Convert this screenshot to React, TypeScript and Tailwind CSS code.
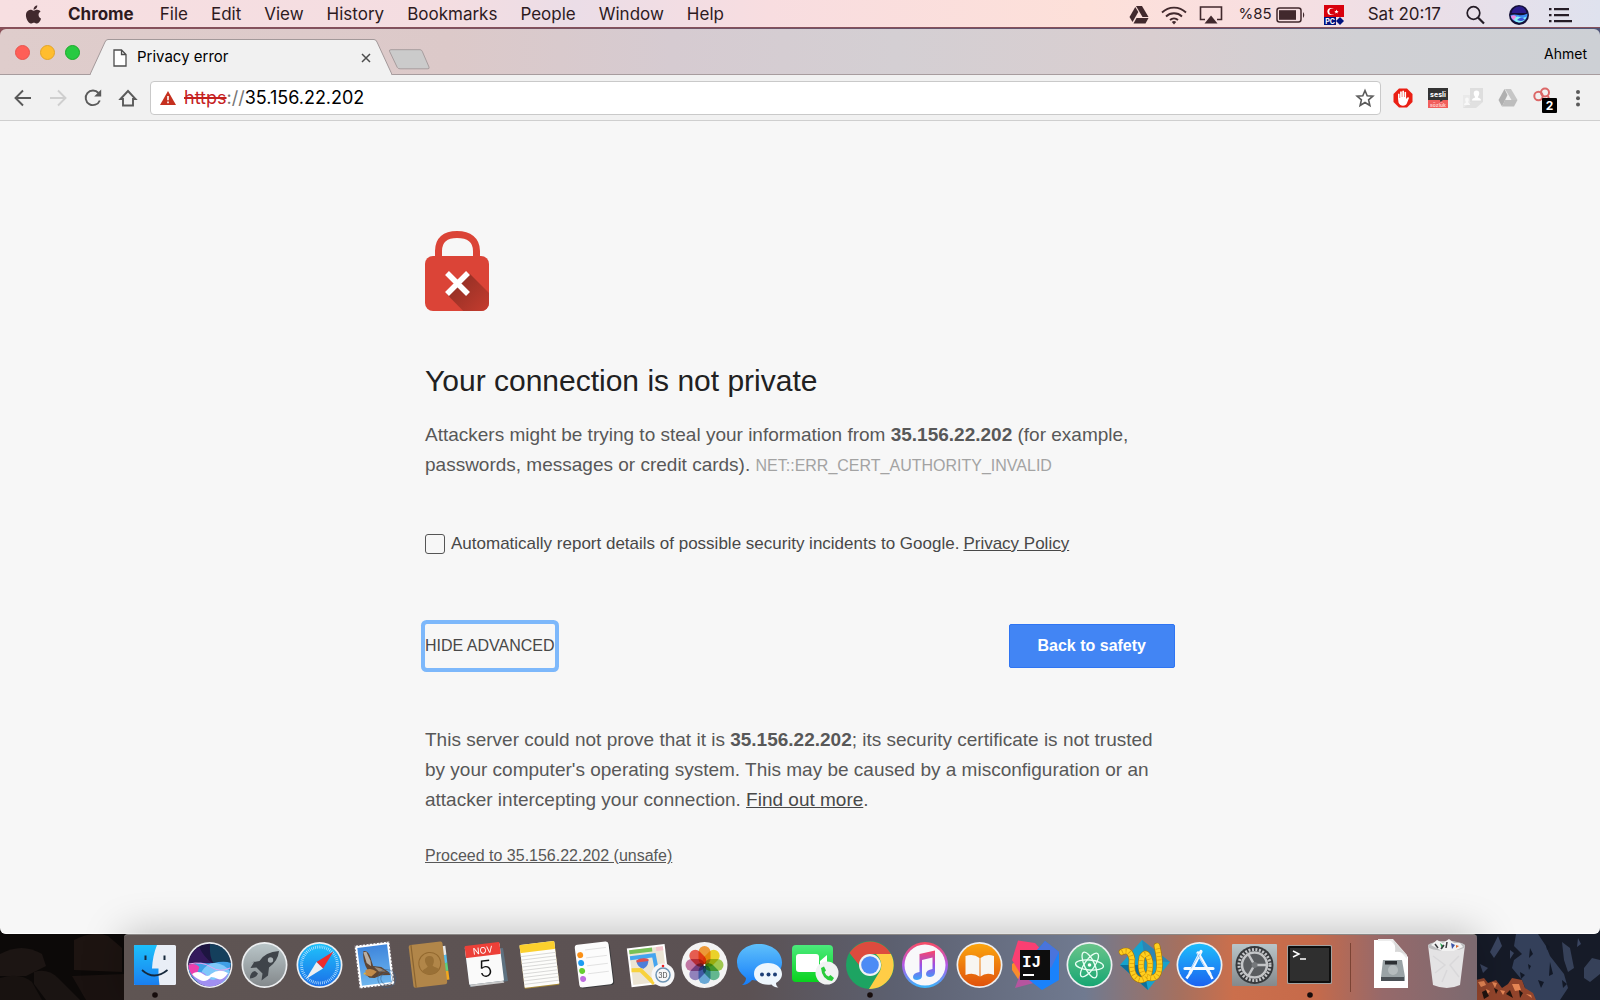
import { ReactNode, useState } from "react";

const APP_MENUS = [
	"File",
	"Edit",
	"View",
	"History",
	"Bookmarks",
	"People",
	"Window",
	"Help",
];

const AppleLogo = () => (
	<svg viewBox="0 0 170 170" className="h-[19px] w-[19px]" fill="#41292d">
		<path d="M150.4 130.3c-2.5 5.7-5.4 10.900-8.700 15.700-4.600 6.500-8.300 11-11.200 13.500-4.500 4.100-9.300 6.200-14.400 6.300-3.700 0-8.100-1-13.300-3.200-5.200-2.100-9.900-3.100-14.300-3.100-4.600 0-9.400 1-14.700 3.100-5.200 2.200-9.500 3.300-12.700 3.400-4.900.2-9.800-1.900-14.700-6.500-3.100-2.700-7-7.400-11.700-14-5-7-9.100-15.200-12.300-24.500-3.500-10.100-5.200-19.800-5.200-29.300 0-10.800 2.300-20.200 7-28 3.700-6.300 8.600-11.200 14.700-14.900 6.100-3.600 12.800-5.500 19.900-5.600 3.900 0 9 1.200 15.400 3.600 6.300 2.400 10.400 3.600 12.200 3.600 1.300 0 5.800-1.400 13.400-4.200 7.100-2.600 13.200-3.700 18.100-3.200 13.400 1.100 23.400 6.400 30.100 15.900-11.900 7.300-17.900 17.400-17.700 30.500.1 10.100 3.800 18.600 11 25.300 3.300 3.100 6.900 5.500 10.900 7.200-.9 2.500-1.800 4.900-2.800 7.400zM119.100 7c0 8-2.900 15.500-8.800 22.400-7 8.200-15.600 13-24.800 12.200-.1-1-.2-2-.2-3 0-7.700 3.400-16 9.300-22.700 3-3.400 6.800-6.300 11.400-8.600 4.600-2.200 8.900-3.500 13-3.700.1 1.100.1 2.300.1 3.400z" />
	</svg>
);

const StatusIcons = () => (
	<div className="flex items-center">
		<svg viewBox="0 0 20 18" className="mr-3 h-[18px] w-5" fill="#41292d">
			<path d="M7 0h6l6.500 11h-6z" />
			<path d="M6.300 1l3 5L3.500 16 .5 11z" />
			<path d="M7.500 12h12l-3 5.500H4.500z" />
		</svg>
		<svg
			viewBox="0 0 26 20"
			className="mr-3 h-5 w-[26px]"
			fill="none"
			stroke="#41292d"
			strokeWidth="1.800"
		>
			<path d="M1 7.500a17 17 0 0 1 24 0M5 11.500a11.500 11.500 0 0 1 16 0M9 15a6 6 0 0 1 8 0" />
			<path d="M10.800 17q2.200-2 4.400 0L13 19.500z" fill="#41292d" stroke="none" />
		</svg>
		<svg viewBox="0 0 24 20" className="mr-4 h-5 w-6" fill="none">
			<path
				d="M6 14.500H1.500V2h21v12.500H18"
				stroke="#41292d"
				strokeWidth="1.600"
			/>
			<path d="M12 10.500l6.500 8h-13z" fill="#41292d" />
		</svg>
		<span className="mr-1 text-[15px]">%85</span>
		<svg viewBox="0 0 30 16" className="mr-[18px] h-4 w-[30px]">
			<rect
				x="1"
				y="1"
				width="24"
				height="14"
				rx="2.500"
				fill="none"
				stroke="#41292d"
				strokeWidth="1.500"
			/>
			<rect x="3" y="3.200" width="17" height="9.600" fill="#41292d" />
			<path d="M27 5q2.500 3 0 6z" fill="#41292d" />
		</svg>
		<svg viewBox="0 0 20 20" className="mr-6 h-5 w-5">
			<rect width="20" height="12" fill="#d8000c" />
			<circle cx="7" cy="6.500" r="3.600" fill="#fff" />
			<circle cx="8.200" cy="6.500" r="2.900" fill="#d8000c" />
			<path d="M12.500 4.500l.6 1.500 1.600.1-1.300 1 .4 1.500-1.300-.8-1.400.8.400-1.500-1.200-1 1.600-.1z" fill="#fff" />
			<rect y="12" width="12" height="8" fill="#00127e" />
			<text
				x="6"
				y="18.500"
				textAnchor="middle"
				className="font-['Inter',sans-serif] text-[7px] font-bold"
				fill="#fff"
			>
				PC
			</text>
			<path d="M16 12l4 4-4 4-4-4z" fill="#00127e" />
		</svg>
	</div>
);

const MenuBar = () => (
	<header className="flex h-[28px] items-center border-b border-[#86505a] bg-[linear-gradient(90deg,#f7dfe1,#f4dde1_28%,#ebdde7_36%,#f8dde0_48%,#fde0d9_68%,#f9dfe0_78%,#eadfe8_90%,#dfe2ee)] pt-[2px] pr-7 pl-6 text-[17px] text-[#2d1a1e]">
		<button aria-label="Apple" className="mr-6 flex w-5">
			<AppleLogo />
		</button>
		<nav className="flex flex-1 items-center gap-[26px]">
			<button className="font-bold">Chrome</button>
			<div className="flex items-center gap-[23px]">
				{APP_MENUS.map((menu) => (
					<button key={menu}>{menu}</button>
				))}
			</div>
		</nav>
		<StatusIcons />
		<span className="mr-6">Sat 20:17</span>
		<button aria-label="Spotlight" className="mr-6">
			<svg
				viewBox="0 0 20 20"
				className="h-5 w-5"
				fill="none"
				stroke="#241c26"
				strokeWidth="1.700"
			>
				<circle cx="8.500" cy="8" r="6.300" />
				<path d="M13 12.500l6 6" strokeWidth="2.200" />
			</svg>
		</button>
		<button aria-label="Siri" className="mr-5">
			<svg viewBox="0 0 20 20" className="h-5 w-5">
				<circle cx="10" cy="10" r="10" fill="#141038" />
				<path d="M2.500 8Q4 2 10 1.500T17.500 8z" fill="#2a1c8c" />
				<path d="M1.500 10q4-1 8 0t9-1.500q0 8-8.500 9-8-1-8.500-7.500z" fill="#3b8bf3" />
				<path d="M2 11q4-2 6 1.500T4.500 15Q2 13 2 11z" fill="#ee8ce0" />
				<path d="M5 15q2-5 5.500-3t7-.5Q16 17 10 17.500 7 17 5 15z" fill="#8af1f6" />
				<path d="M8 15q4-4 8-.5-3 2.500-8 .5z" fill="#3a55d8" />
			</svg>
		</button>
		<button aria-label="Notification Center">
			<svg viewBox="0 0 23 16" className="h-4 w-[23px]" fill="#241c26">
				<path d="M0 1h2.500v2.300H0zM5 1h15v2.300H5zM0 7h2.500v2.300H0zM5 7h15v2.300H5zM0 13h2.500v2.300H0zM5 13h18v2.300H5z" />
			</svg>
		</button>
	</header>
);

const TabStrip = () => (
	<div className="flex h-[46px] items-end rounded-t-md border-b border-[#a79c9e] bg-[linear-gradient(90deg,#dfcdcc,#dcc9c9_28%,#d6cbd1_42%,#d4cfd3_56%,#d9ced0_72%,#d0d0d4_85%,#cdd0d5)]">
		<div className="flex gap-[10px] self-center pt-px pl-[15px]">
			<button
				aria-label="Close window"
				className="h-[15px] w-[15px] rounded-full border border-[#e8544d] bg-[#ff5f57]"
			/>
			<button
				aria-label="Minimize window"
				className="h-[15px] w-[15px] rounded-full border border-[#e3a428] bg-[#ffbd2e]"
			/>
			<button
				aria-label="Zoom window"
				className="h-[15px] w-[15px] rounded-full border border-[#1aab29] bg-[#28ca41]"
			/>
		</div>
		<div className="relative -mb-px ml-[10px] h-9 w-[302px]">
			<svg
				viewBox="0 0 302 36"
				className="absolute inset-0 h-full w-full"
				fill="#f1f1f1"
			>
				<path
					d="M0 35.500L15 3Q16 .5 18 .5H284Q286 .5 287 3L302 35.500"
					stroke="#a3999a"
				/>
				<path d="M1 35h300v1H1z" />
			</svg>
			<div className="relative flex h-full items-center pt-px pr-[21px] pl-[23px]">
				<svg
					viewBox="0 0 14 18"
					className="h-[18px] w-[14px]"
					fill="#fff"
					stroke="#4d4d4d"
					strokeWidth="1.300"
				>
					<path d="M1 1h7.500L13 5.500V17H1zM8.500 1v4.500H13" />
				</svg>
				<span className="ml-[10px] flex-1 text-[15px] text-black">
					Privacy error
				</span>
				<button aria-label="Close tab">
					<svg
						viewBox="0 0 10 10"
						className="h-[10px] w-[10px]"
						stroke="#4c4c4c"
						strokeWidth="1.500"
					>
						<path d="M1 1l8 8M9 1L1 9" />
					</svg>
				</button>
			</div>
		</div>
		<button aria-label="New tab" className="-ml-1 mb-1">
			<svg viewBox="0 0 42 21" className="h-[21px] w-[42px]">
				<path
					d="M3 .7h29q1.500 0 2.200 1.500L41 18q.6 1.800-1 1.800H12q-2 0-2.800-1.500L1.500 2.200Q1 .7 3 .7z"
					fill="#cbcbcb"
					stroke="#a79d9e"
				/>
			</svg>
		</button>
		<button className="mr-[13px] ml-auto self-center pt-1 text-sm text-black">
			Ahmet
		</button>
	</div>
);

const NavIcon = ({
	label,
	children,
	color = "#5a5a5a",
}: {
	label: string;
	children: ReactNode;
	color?: string;
}) => (
	<button aria-label={label}>
		<svg
			viewBox="0 0 20 20"
			className="h-5 w-5"
			fill="none"
			stroke={color}
			strokeWidth="1.900"
		>
			{children}
		</svg>
	</button>
);

const Extensions = () => (
	<div className="flex items-center gap-[15px]">
		<button aria-label="AdBlock">
			<svg viewBox="0 0 20 20" className="h-5 w-5">
				<path d="M6 .5h8L19.500 6v8L14 19.500H6L.5 14V6z" fill="#ea1f14" />
				<path
					d="M5 10.500V6q.9-1 1.600 0v4h.5V3.800q.9-1 1.700 0V9h.5V3q.9-1 1.700 0v6h.5V4.300q.9-1 1.600 0V11l1.300-1.500q1.200-.7 1.600.4L14 15q-1 2.800-4 2.800T5.500 14.500z"
					fill="#fff"
				/>
			</svg>
		</button>
		<button aria-label="Sesli Sözlük">
			<svg viewBox="0 0 20 20" className="h-5 w-5">
				<rect width="20" height="12" fill="#333" />
				<rect y="12" width="20" height="8" fill="#f15e5c" />
				<path d="M12 12h3l-2.500 2z" fill="#333" />
				<text
					x="10"
					y="9"
					textAnchor="middle"
					fill="#fff"
					className="font-['Inter',sans-serif] text-[7px] font-bold"
				>
					sesli
				</text>
				<text
					x="10"
					y="18.500"
					textAnchor="middle"
					fill="#ffc9c7"
					className="font-['Inter',sans-serif] text-[5px] font-bold"
				>
					sözlük
				</text>
			</svg>
		</button>
		<button aria-label="Contacts extension">
			<svg viewBox="0 0 20 20" className="h-5 w-5">
				<path d="M0 7h9v13H0z" fill="#e9e9e9" />
				<path d="M8 14h12l-7 6H0z" fill="#e0e0e0" />
				<rect x="7" width="13" height="14" fill="#dedede" />
				<path
					d="M13.500 2.500c4 0 3 5 1.300 6.500.3 1.500 3.200.8 3.200 3.500H9c0-2.700 2.900-2 3.200-3.500-1.700-1.500-2.700-6.500 1.300-6.500z"
					fill="#fff"
				/>
				<path
					d="M4 9.500c2.500 0 2 3.500 1 4.500 0 1 2 1 2 3H1c0-2 2-2 2-3-1-1-1.500-4.500 1-4.500z"
					fill="#f8f8f8"
				/>
			</svg>
		</button>
		<button aria-label="Drive extension">
			<svg viewBox="0 0 20 18" className="h-[18px] w-5">
				<path d="M7 0h6l6.500 11h-6z" fill="#c6c6c6" />
				<path d="M6.500 0L9.500 6 4 17.500.5 11z" fill="#b0b0b0" />
				<path d="M7 11h12.500L16 17.500H4z" fill="#bdbdbd" />
			</svg>
		</button>
		<button aria-label="Mask extension, 2" className="-mr-[6px]">
			<svg viewBox="0 0 26 26" className="mt-1 h-[26px] w-[26px]">
				<g fill="none" stroke="#dc6868" strokeWidth="2">
					<circle cx="5.500" cy="9" r="4.200" />
					<circle cx="12" cy="5.500" r="4" />
					<path d="M9 11l3 2 4-1-1-3" />
				</g>
				<rect x="9" y="11" width="15" height="15" rx="1" fill="#000" />
				<text
					x="16.500"
					y="23"
					textAnchor="middle"
					fill="#fff"
					className="font-['Inter',sans-serif] text-[12px] font-bold"
				>
					2
				</text>
			</svg>
		</button>
		<button aria-label="Chrome menu">
			<svg viewBox="0 0 20 20" className="h-5 w-5" fill="#5a5a5a">
				<circle cx="10" cy="4" r="2" />
				<circle cx="10" cy="10.300" r="2" />
				<circle cx="10" cy="16.600" r="2" />
			</svg>
		</button>
	</div>
);

const Toolbar = () => (
	<div className="flex h-[46px] items-center border-b border-[#cfcfcf] bg-[#f1f1f1] pr-3 pl-[13px]">
		<div className="flex gap-[15px]">
			<NavIcon label="Back">
				<path d="M18 10H3M10 2.500L2.500 10l7.500 7.500" />
			</NavIcon>
			<NavIcon label="Forward" color="#cfcfcf">
				<path d="M2 10h15M10 2.500l7.500 7.500-7.500 7.500" />
			</NavIcon>
			<NavIcon label="Reload">
				<path d="M16.800 12.500a7.300 7.300 0 1 1-1.300-7.500" />
				<path d="M18.200 1.500v7h-7z" fill="#5a5a5a" stroke="none" />
			</NavIcon>
			<NavIcon label="Home">
				<path d="M2.500 11L10 3l7.500 8H15v6.500H5V11z" />
			</NavIcon>
		</div>
		<div className="mx-3 flex h-[34px] flex-1 items-center rounded-[4px] border border-[#c9c9c9] bg-white px-[9px] text-[18px]">
			<svg viewBox="0 0 16 14" className="mr-2 h-[14px] w-4">
				<path d="M8 0l8 14H0z" fill="#c5301f" />
				<path d="M7.200 5h1.600v4.300H7.200zM7.200 10.500h1.600v1.700H7.200z" fill="#fff" />
			</svg>
			<label htmlFor="address" className="text-[#757575]">
				<span className="text-[#c5221f] line-through decoration-2">https</span>
				://
			</label>
			<input
				id="address"
				defaultValue="35.156.22.202"
				className="min-w-0 flex-1 bg-transparent text-black outline-none"
			/>
			<button aria-label="Bookmark this page">
				<svg
					viewBox="0 0 20 20"
					className="-mr-1 h-5 w-5"
					fill="none"
					stroke="#5a5a5a"
					strokeWidth="1.600"
				>
					<path d="M10 2.500l2.200 5.200 5.700.5-4.300 3.700 1.300 5.600L10 14.500l-4.900 3 1.300-5.600-4.300-3.700 5.700-.5z" />
				</svg>
			</button>
		</div>
		<Extensions />
	</div>
);

const BrokenLock = () => (
	<svg viewBox="0 0 64 80" className="h-20 w-16">
		<defs>
			<linearGradient id="lock-shadow" x1="0.200" y1="0.200" x2="0.700" y2="0.700">
				<stop offset="0" stopColor="#983126" />
				<stop offset="1" stopColor="#c23b2e" />
			</linearGradient>
			<clipPath id="lock-body">
				<rect y="25" width="64" height="55" rx="8" />
			</clipPath>
		</defs>
		<path
			d="M13.500 27V20C13.500 9 20 3.500 32 3.500S51.500 9 51.500 20v7"
			fill="none"
			stroke="#db4437"
			strokeWidth="7"
		/>
		<rect y="25" width="64" height="55" rx="8" fill="#db4437" />
		<path
			d="M45 43l30 30-20 24L22 63.500 32 52z"
			fill="url(#lock-shadow)"
			clipPath="url(#lock-body)"
		/>
		<path d="M22 42l21 21M43 42L22 63" stroke="#fff" strokeWidth="5.500" />
	</svg>
);

const Interstitial = () => {
	const [report, setReport] = useState(false);

	return (
		<main className="flex-1 rounded-b-md border-b border-white bg-[#f7f7f7] px-6 pt-[110px] font-['Liberation_Sans',Arial,sans-serif] text-[19px] leading-[30px] text-[#585858]">
			<div className="mx-auto max-w-[750px]">
				<BrokenLock />
				<h1 className="mt-[50px] text-[30px] leading-10 text-[#212121]">
					Your connection is not private
				</h1>
				<p className="mt-[19px]">
					Attackers might be trying to steal your information from{" "}
					<strong>35.156.22.202</strong> (for example, passwords, messages or
					credit cards).{" "}
					<span className="text-base text-[#a3a3a3]">
						NET::ERR_CERT_AUTHORITY_INVALID
					</span>
				</p>
				<div className="mt-[49px] flex items-center text-[17px] text-[#484848]">
					<input
						id="report"
						type="checkbox"
						checked={report}
						onChange={() => setReport(!report)}
						className="mr-[6px] h-5 w-5 appearance-none rounded-[3px] border border-[#555] checked:bg-[#555]"
					/>
					<label htmlFor="report">
						Automatically report details of possible security incidents to
						Google.
					</label>
					<a href="#privacy" className="ml-1 underline">
						Privacy Policy
					</a>
				</div>
				<div className="mt-[65px] flex items-center justify-between text-base">
					<button className="h-11 rounded-xs text-[#484848] uppercase ring-4 ring-[#7db8fb]">
						Hide advanced
					</button>
					<button className="h-11 rounded-xs border border-[#2f75f3] bg-[#4285f4] px-7 font-bold text-white">
						Back to safety
					</button>
				</div>
				<p className="mt-[57px]">
					This server could not prove that it is{" "}
					<strong>35.156.22.202</strong>; its security certificate is not
					trusted by your computer's operating system. This may be caused by a
					misconfiguration or an attacker intercepting your connection.{" "}
					<a href="#more" className="text-[#484848] underline">
						Find out more
					</a>
					.
				</p>
				<p className="mt-[26px] text-base leading-[30px]">
					<a href="#proceed" className="underline">
						Proceed to 35.156.22.202 (unsafe)
					</a>
				</p>
			</div>
		</main>
	);
};

// Every dock drawing lives in a 55px wide cell with the glyph centred on 27.5,31.
const Disc = ({ fill, rim = "#eceef0" }: { fill: string; rim?: string }) => (
	<>
		<circle cx="27.500" cy="31" r="23" fill={rim} />
		<circle cx="27.500" cy="31" r="21.300" fill={fill} />
	</>
);

const PETALS = [
	"#f9941e",
	"#f5d80f",
	"#9bcb3b",
	"#53b788",
	"#5aa5dc",
	"#8a78bd",
	"#c46aa0",
	"#ef4b3c",
];

const ROPE =
	"M5 18Q13 14 15 25Q13 44 24 46Q34 45 33 28Q30 15 25 23Q21 44 35 44Q47 43 40 12";

const DOCK_APPS: { name: string; running?: boolean; art: ReactNode }[] = [
	{
		name: "Finder",
		running: true,
		art: (
			<>
				<rect x="7" y="11" width="42" height="40" rx="1.500" fill="#e9eef6" />
				<path
					d="M8 11h22c-3 7-4.500 15-5 23.500h6.500c-.2 6 .3 11 1 16.500H8q-1 0-1-1.500V12.500Q7 11 8 11z"
					fill="url(#finder)"
				/>
				<path
					d="M18.500 21.500v4.500M37.500 21.500v4.500"
					stroke="#16293c"
					strokeWidth="2"
				/>
				<path
					d="M15 36q12 11 25.500 0"
					fill="none"
					stroke="#16293c"
					strokeWidth="1.700"
				/>
			</>
		),
	},
	{
		name: "Siri",
		art: (
			<>
				<Disc fill="#1d1540" />
				<path d="M28 10q19 1 21 21l-3 9q-9-3-14-10t-4-20z" fill="#134a63" opacity=".8" />
				<path d="M6.300 30q2-12 11-17 4 10 14 17t14 12z" fill="#3b1c63" opacity=".8" />
				<path
					d="M6.300 32q8-4 16-3t14-1q8-1 12.500 1-1 14-10 20-11 6-22 0-10-6-10.500-17z"
					fill="#3f9fe6"
				/>
				<path d="M6.300 31q7-3 11 2l-4 12Q7 39 6.300 31z" fill="#ec3fae" />
				<path d="M20 37q6-9 14-8t14 8q-2 8-8 12H17z" fill="#7fc8fa" />
				<path d="M11 42q8-8 14 0t12 0 9-1q-5 11-18.500 11.500Q16 52 11 42z" fill="#a08ff0" />
				<path
					d="M10 40q6-4 11 0t8 0q8-6 17-1-5 8-10 6-4-2-7-2-5 6-11 3t-8-6z"
					fill="#fff"
				/>
				<path d="M7 30q13-3 22 3t19 1" fill="none" stroke="#e8a2f0" />
			</>
		),
	},
	{
		name: "Launchpad",
		art: (
			<>
				<Disc fill="url(#steel)" />
				<path
					d="M42 17q-14 1-19.500 10l-8 1.500 3-1-4 6.500 6-.5 6 6-1 7 6.500-5 1-8Q41 27 42 17z"
					fill="#3f444a"
				/>
				<circle cx="33.500" cy="26" r="2.700" fill="#aab2b6" />
				<path d="M18 37q-5 1-5 7.500 6-.5 8-5z" fill="#3f444a" />
			</>
		),
	},
	{
		name: "Safari",
		art: (
			<>
				<Disc fill="url(#safari)" />
				<circle
					cx="27.500"
					cy="31"
					r="18"
					fill="none"
					stroke="#bfe6ff"
					strokeWidth="3"
					strokeDasharray="0.700 1.200"
				/>
				<path d="M41.500 17.500L31 34.500 24.500 28z" fill="#ee2c2c" />
				<path d="M14 45l10.500-17 6.500 6.500z" fill="#eceff2" />
			</>
		),
	},
	{
		name: "Mail",
		art: (
			<g transform="rotate(-7 27 31)">
				<rect x="10" y="9.500" width="35" height="43" fill="#fff" />
				<rect
					x="10"
					y="9.500"
					width="35"
					height="43"
					fill="none"
					stroke="#6a6063"
					strokeWidth="1.500"
					strokeDasharray="1.500 2"
				/>
				<rect x="12.500" y="12" width="30" height="38" fill="url(#sky)" />
				<path
					d="M18 16q4-1 6 5l2 11 8 2 7 6 1 3-9-1-7 2-5-1-3-3 2-5q-4-9-2-19z"
					fill="#5f4634"
				/>
				<path d="M18 17l3 0 3 9 0 6-4-4z" fill="#b9aea3" />
				<path d="M27 33l6 2 5 4-7-1z" fill="#9c8a78" />
				<path d="M18 35q6-2 11 3l-6 4-6-2z" fill="#c28b4a" />
				<path d="M17 37l-2 2 3 0z" fill="#f0b429" />
				<g fill="none" stroke="#3b5f86" opacity=".5">
					<circle cx="38" cy="46" r="9" />
					<circle cx="38" cy="46" r="6" />
				</g>
			</g>
		),
	},
	{
		name: "Contacts",
		art: (
			<g transform="rotate(-7 27 31)">
				<path d="M42 14h3.500v9H42z" fill="#e8e8e8" />
				<path d="M42 23h3.500v8H42z" fill="#58bdea" />
				<path d="M42 31h3.500v8H42z" fill="#5fd07a" />
				<path d="M42 39h3.500v9H42z" fill="#f2a81d" />
				<rect x="9" y="9" width="34" height="43" rx="2" fill="#b18649" />
				<path d="M11.500 9v43" stroke="#8a6431" strokeWidth="1.200" />
				<circle cx="28" cy="29.500" r="11" fill="none" stroke="#93692f" />
				<path
					d="M28 22c6 0 5 7 2.500 10 .5 2 5 2 6 5-5 5-12 5-17 0 1-3 5.500-3 6-5C23 29 22 22 28 22z"
					fill="#997036"
				/>
			</g>
		),
	},
	{
		name: "Calendar",
		art: (
			<>
				<path d="M8 17l5 36 38-6-5-33z" fill="#5d7180" />
				<g transform="rotate(-7 27 31)">
					<rect x="10" y="11" width="35" height="38" rx="1" fill="#fafafa" />
					<rect x="10" y="10" width="35" height="12" rx="1" fill="#ec4038" />
					<path d="M11 49h33l1 2H11z" fill="#c9c9c9" />
					<text
						x="27.500"
						y="19.500"
						textAnchor="middle"
						fill="#fff"
						className="font-['Inter',sans-serif] text-[9px]"
					>
						NOV
					</text>
					<text
						x="28"
						y="43"
						textAnchor="middle"
						fill="#111"
						className="font-['Inter',sans-serif] text-[23px] font-light"
					>
						5
					</text>
				</g>
			</>
		),
	},
	{
		name: "Notes",
		art: (
			<g transform="rotate(-7 27 31)">
				<rect x="10" y="10" width="35" height="43" rx="1" fill="#a88a36" />
				<rect x="10" y="9" width="35" height="43" rx="1" fill="#fdfdfb" />
				<rect x="10" y="9" width="35" height="8" rx="1" fill="#fbd02d" />
				<path
					d="M10 20.500h35M10 24h35M10 27.500h35M10 31h35M10 34.500h35M10 38h35M10 41.500h35M10 45h35M10 48.500h35"
					stroke="#d2d2d0"
					strokeWidth=".8"
				/>
			</g>
		),
	},
	{
		name: "Reminders",
		art: (
			<g transform="rotate(-7 27 31)">
				<rect x="11" y="10" width="34" height="43" rx="3" fill="#3a3a3c" />
				<rect x="10" y="9" width="34" height="43" rx="3" fill="#fcfcfc" />
				<path
					d="M20 15h21M20 23h21M20 31h21M20 39h21"
					stroke="#dcdcdc"
					strokeWidth=".8"
				/>
				<circle cx="14.500" cy="19.500" r="3" fill="#fb9016" />
				<circle cx="14.500" cy="27.500" r="3" fill="#1c9cf2" />
				<circle cx="14.500" cy="35.500" r="3" fill="#66cf30" />
				<circle cx="14.500" cy="43.500" r="3" fill="#bf6ee0" />
			</g>
		),
	},
	{
		name: "Maps",
		art: (
			<>
				<g transform="rotate(-7 27 31)">
					<rect x="7" y="12" width="38" height="39" fill="#fff" />
					<rect x="9" y="14" width="34" height="35" fill="#ece5d4" />
					<path d="M9 14h23v4H9z" fill="#77c157" />
					<path d="M36 14h7v4h-7z" fill="#f4c4cb" />
					<path d="M9 22h24l2 27" fill="none" stroke="#45a5ef" strokeWidth="4" />
					<path d="M9 34l9 1 12 15" fill="none" stroke="#f8d23c" strokeWidth="4" />
					<path d="M15 25q6-3 12 0 0 7-6 9-6-2-6-9z" fill="#4f7fd8" />
					<path d="M15 25q6-3 12 0v2H15z" fill="#e0504d" />
				</g>
				<circle cx="41" cy="41" r="11.500" fill="#f6f7f8" />
				<circle cx="41" cy="41" r="7" fill="none" stroke="#6d94b3" strokeWidth="1.500" />
				<circle cx="41" cy="32" r="1.300" fill="#e22" />
				<text
					x="41"
					y="43.500"
					textAnchor="middle"
					fill="#444"
					className="font-['Inter',sans-serif] text-[7px]"
				>
					3D
				</text>
			</>
		),
	},
	{
		name: "Photos",
		art: (
			<>
				<circle cx="27.500" cy="31" r="23" fill="#f3f3f3" />
				{PETALS.map((color, index) => (
					<rect
						key={color}
						x="21.500"
						y="12"
						width="12"
						height="19"
						rx="6"
						fill={color}
						opacity=".88"
						className="mix-blend-multiply"
						transform={`rotate(${index * 45} 27.500 31)`}
					/>
				))}
				<circle cx="27.500" cy="31" r="1" fill="#fff" />
			</>
		),
	},
	{
		name: "Messages",
		art: (
			<>
				<path
					d="M27 10c13 0 23 8 23 18.500S40 47 27 47l-7-1q-4 5-10 5 4-3 4-7Q5 37 5 28.500C5 18 14 10 27 10z"
					fill="url(#bubble)"
				/>
				<path
					d="M36 29c8 0 14 4.500 14 11 0 4-3 7.500-6 9 0 2 1 3.500 2.500 4.500-4 0-6-1.500-7-3C30 52 22 47 22 40s6-11 14-11z"
					fill="#eef6fd"
				/>
				<g fill="#1e3f77">
					<circle cx="30" cy="40.500" r="2" />
					<circle cx="36.500" cy="40.500" r="2" />
					<circle cx="43" cy="40.500" r="2" />
				</g>
			</>
		),
	},
	{
		name: "FaceTime",
		art: (
			<>
				<rect x="5" y="11" width="41" height="37" rx="4" fill="url(#green)" />
				<rect x="9" y="20" width="23" height="18" rx="3" fill="#fff" />
				<path d="M33 27l7-6v15l-7-4z" fill="#fff" />
				<circle cx="40" cy="39" r="11.500" fill="#f1f3f3" />
				<path
					d="M34 34l3-1.500 2 4-1.500 1.500q1 3 4 4.500l2-1.500 3.500 3-2 3Q35 46 34 34z"
					fill="#2acb3c"
				/>
			</>
		),
	},
	{
		name: "Chrome",
		running: true,
		art: (
			<>
				<circle cx="28" cy="31" r="24" fill="#1da462" />
				<path d="M7.500 19A24 24 0 0 1 49 20H28q-8 1-11 11z" fill="#dd4b3e" />
				<path d="M49 20a24 24 0 0 1-22 35l11-18q4-9-4-17z" fill="#ffcd46" />
				<circle cx="28" cy="31" r="11" fill="#f2f2f2" />
				<circle cx="28" cy="31" r="8.800" fill="#4c8bf5" />
			</>
		),
	},
	{
		name: "iTunes",
		art: (
			<>
				<circle cx="28" cy="31" r="23" fill="url(#itunes)" />
				<circle cx="28" cy="31" r="20.500" fill="#f8f8fa" />
				<path
					d="M22.500 20L38 16.500V38q0 4.500-5 5-4 0-4-3 0-4 6.500-5V23.500L25 26v16q0 3.500-5 4-4 0-4-3 0-4 6.500-5z"
					fill="url(#note)"
				/>
			</>
		),
	},
	{
		name: "iBooks",
		art: (
			<>
				<Disc fill="url(#orange)" />
				<path
					d="M27.500 24q-6-5-14-2v19q8-3 14 1.500zM28.500 24q6-5 13.500-2v19q-8-3-13.500 1.500z"
					fill="#f7f5f2"
				/>
			</>
		),
	},
	{
		name: "IntelliJ IDEA",
		art: (
			<>
				<path d="M5 30l8-5 4 18-6 2-6-9z" fill="#f98c2c" />
				<path d="M11 6.500L28 9l12 13-24 22L5 26z" fill="#fb3f72" />
				<path d="M14 38l-6 16 30-8-6-14z" fill="#b5559f" />
				<path d="M38 7l14 11v28L35 56 22 46l8-30z" fill="#1a82fb" />
				<path d="M38 7l14 11-8 16-16-14z" fill="#4a74dc" />
				<rect x="13" y="16" width="30" height="30" fill="#0d0d0d" />
				<path d="M16 40h11v2H16z" fill="#fff" />
				<text
					x="15"
					y="33"
					fill="#fff"
					className="font-['Liberation_Mono',monospace] text-[16px] font-bold"
				>
					IJ
				</text>
			</>
		),
	},
	{
		name: "Atom",
		art: (
			<>
				<Disc fill="url(#atom)" />
				<g fill="none" stroke="#e9fff4" strokeWidth="1.300">
					<ellipse cx="27.500" cy="31" rx="14" ry="5" transform="rotate(5 27.500 31)" />
					<ellipse cx="27.500" cy="31" rx="14" ry="5" transform="rotate(65 27.500 31)" />
					<ellipse cx="27.500" cy="31" rx="14" ry="5" transform="rotate(-55 27.500 31)" />
				</g>
				<circle cx="27.500" cy="31" r="1.800" fill="#fff" />
			</>
		),
	},
	{
		name: "Rope",
		art: (
			<>
				<path d="M25 6l28 22-22 28L3 31z" fill="#17a2cc" />
				<path d="M25 6l28 22-25-1z" fill="#2c86b5" />
				<path d="M3 31l28 25-5-25z" fill="#0d6f9b" />
				<g fill="none" strokeLinecap="round">
					<path d={ROPE} stroke="#a87708" strokeWidth="6.500" />
					<path d={ROPE} stroke="#ffcf1f" strokeWidth="5.200" />
					<path
						d={ROPE}
						stroke="#d99e0c"
						strokeWidth="4.500"
						strokeLinecap="butt"
						strokeDasharray="0.800 3"
					/>
				</g>
			</>
		),
	},
	{
		name: "App Store",
		art: (
			<>
				<Disc fill="url(#store)" />
				<g stroke="#f4faff" strokeWidth="3.200" strokeLinecap="round">
					<path d="M29 17.500L18 39M13 34.500h28M26 19l12 21" />
				</g>
				<path d="M17.500 40l-3 4.500M38.500 41l2 4" stroke="#f4faff" strokeWidth="2.500" />
				<path d="M19 34.500l9-15M25 19l8 14" stroke="#7fb8f6" strokeWidth=".7" />
			</>
		),
	},
	{
		name: "System Preferences",
		art: (
			<>
				<rect x="5" y="10" width="45" height="42" rx="1" fill="url(#steel)" />
				<circle cx="27.500" cy="31" r="19" fill="#36393c" />
				<circle
					cx="27.500"
					cy="31"
					r="15.500"
					fill="none"
					stroke="#c3c5c7"
					strokeWidth="3"
					strokeDasharray="2 1.500"
				/>
				<circle
					cx="27.500"
					cy="31"
					r="12.500"
					fill="#5a5d60"
					stroke="#c3c5c7"
					strokeWidth="2.500"
				/>
				<path
					d="M27.500 31h12M27.500 31l-6-10.500M27.500 31l-6 10.500"
					stroke="#c3c5c7"
					strokeWidth="2.500"
				/>
				<circle cx="27.500" cy="31" r="3" fill="#75787b" />
			</>
		),
	},
	{
		name: "Terminal",
		running: true,
		art: (
			<>
				<rect x="5" y="11" width="45" height="39" rx="1.500" fill="#a3a19f" />
				<rect x="6" y="12" width="43" height="37" rx="1" fill="#0e0e0e" />
				<rect x="8" y="14" width="39" height="33" fill="#2f2f2f" />
				<path
					d="M11 17l6 3-6 3M18 25h6"
					fill="none"
					stroke="#fff"
					strokeWidth="1.500"
				/>
			</>
		),
	},
];

const DOCK_FILES: { name: string; running?: boolean; art: ReactNode }[] = [
	{
		name: "Disk image",
		art: (
			<>
				<path d="M10 6h17l17 17v31H10z" fill="#fff" />
				<path d="M14 5h15l14 16v4L27 7H14z" fill="#ececec" />
				<path d="M29 6q3 6 2 12 7-1 13 5z" fill="#d7d7d7" />
				<path d="M19 26h19l3 17v4H17v-4z" fill="#9aa3a6" />
				<rect x="21" y="27" width="12" height="3.500" fill="#2b2f33" />
				<circle cx="29" cy="36" r="5" fill="#b5bcbe" />
				<path d="M17 43h23v4H17z" fill="#4b5156" />
			</>
		),
	},
	{
		name: "Trash",
		art: (
			<>
				<path d="M9 11q19-8 37 0l-5 40q-13 6-27 0z" fill="#e4e3e4" />
				<ellipse cx="27.500" cy="12" rx="18.500" ry="5" fill="#bdbdbf" />
				<path d="M12 11l6-5 6 3 6-4 5 4 6 0 3 4-9 4-12 0z" fill="#f2f2f2" />
				<path d="M21 9l4 3-2 3z" fill="#27a04e" />
				<path d="M32 9l4 2-3 4z" fill="#3a53a8" />
				<path d="M37 11l3 1-3 2z" fill="#d9672a" />
				<path d="M16 10l3 4M28 8l-1 6M25 11l-3 4" stroke="#3c3c40" strokeWidth="1.500" />
				<path
					d="M14 22l12 9-10 8M40 22l-9 9 9 12M28 36l-5 12"
					fill="none"
					stroke="#d9d8da"
					strokeWidth="1.500"
				/>
			</>
		),
	},
];

const Gradient = ({ id, stops }: { id: string; stops: string[] }) => (
	<linearGradient id={id} x1="0" y1="0" x2="0" y2="1">
		{stops.map((color, index) => (
			<stop
				key={color}
				offset={index / (stops.length - 1)}
				stopColor={color}
			/>
		))}
	</linearGradient>
);

const DockGradients = () => (
	<svg className="absolute h-0 w-0" aria-hidden="true">
		<defs>
			<Gradient id="finder" stops={["#1cc0fb", "#1a7ff0"]} />
			<Gradient id="steel" stops={["#b9c5c8", "#84898c"]} />
			<Gradient id="safari" stops={["#1fc3fb", "#1b6fe8"]} />
			<Gradient id="sky" stops={["#3f86dc", "#6db5ee"]} />
			<Gradient id="bubble" stops={["#5fc0fb", "#147dfa"]} />
			<Gradient id="green" stops={["#4bea7c", "#09d21e"]} />
			<Gradient id="itunes" stops={["#fb4c60", "#b357ea", "#35b8fb"]} />
			<Gradient id="note" stops={["#fa4767", "#9b4ee6", "#3aa6f8"]} />
			<Gradient id="orange" stops={["#fba50e", "#e0520c"]} />
			<Gradient id="atom" stops={["#69c48a", "#17a673"]} />
			<Gradient id="store" stops={["#1dbdfb", "#1c62f0"]} />
		</defs>
	</svg>
);

const DockItem = ({
	name,
	running,
	art,
}: {
	name: string;
	running?: boolean;
	art: ReactNode;
}) => (
	<button aria-label={name} className="min-w-0">
		<svg viewBox="0 1 55 65" className="h-[65px] w-[55px]">
			{art}
			{running && <circle cx="28" cy="61" r="2.800" fill="#160c0c" />}
		</svg>
	</button>
);

const Dock = () => (
	<div className="relative z-10 flex rounded-t-[4px] border-t border-[#8a8785] bg-[linear-gradient(90deg,#5f5553,#5b5153_46%,#5c6070_57%,#707a90_71%,#a5705f_78%,#cb6f4c_82%,#c66a4a_88%,#96696a_93%,#7c6a70)] px-[3px] shadow-[0_0_40px_rgba(0,0,0,0.25)]">
		<DockGradients />
		<div className="flex">
			{DOCK_APPS.map((app) => (
				<DockItem key={app.name} {...app} />
			))}
			<div className="mx-[13px] my-2 w-px bg-[#7b4334]" />
			{DOCK_FILES.map((file) => (
				<DockItem key={file.name} {...file} />
			))}
		</div>
	</div>
);

const Wallpaper = () => (
	<svg
		viewBox="0 0 1600 80"
		preserveAspectRatio="none"
		className="absolute inset-x-0 bottom-0 h-20 w-full"
		aria-hidden="true"
	>
		<rect width="1600" height="80" fill="#0c0908" />
		<g>
			<path d="M0 34q22-12 42 0l4 12-20 10H0z" fill="#1c1513" />
			<path d="M0 58q20-6 32 4l10 18H0z" fill="#181210" />
			<path d="M74 20q20-10 34-4l14 12v24l-48-2z" fill="#1d1411" />
			<path d="M34 52q14-4 24 6l22 22H46L34 64z" fill="#1a1412" />
			<path d="M72 56l52-2v26H86z" fill="#1a1210" />
		</g>
		<g>
			<rect x="1476" width="124" height="80" fill="#161b28" />
			<path d="M1516 14l22 0 8 12 4 10 14 18 4 14-8 12h-30l-8-20-10-12 2-8 8-6-8-8z" fill="#34405a" />
			<path d="M1562 22l8 6 4 20-6 4-4-12zM1584 48l8-10 8 2v14l-10 8-6-4z" fill="#364159" />
			<path d="M1498 16l4 10-8 12-4-6zM1480 44l8 4-5 5zM1510 30l4 3-4 6zM1578 18l3 6-4 3z" fill="#3a4560" />
			<path d="M1530 28l3 6-4 4zM1550 42l3 12-4 2zM1520 52l5 3-4 4zM1538 60l6 2-3 6zM1546 24l4 3-3 3zM1562 60l5 4-4 4zM1528 44l3 2-2 4z" fill="#121826" />
			<path d="M1476 60l8-2 4 5 8-3 6 8 6-4 4-6 10 2 3 8 8 5 3 7H1476z" fill="#93452c" />
			<path d="M1478 62l6-1 2 4-5 2zM1492 62l5 1-2 5zM1512 64l7 0 2 6-6 1zM1500 70l5 1-2 4zM1486 69l4 2-3 4zM1526 74l5 1 1 3z" fill="#e58655" />
			<path d="M1482 72l4-2 3 6-5 3zM1506 74l4-4 3 8zM1494 68l4 2-2 4zM1519 70l4 3-3 5z" fill="#20140f" />
		</g>
	</svg>
);

const App = () => {
	return (
		<div className="relative flex min-h-screen flex-col overflow-x-hidden bg-linear-to-r from-[#8b5058] to-[#4f5478] font-['Inter',sans-serif]">
			<Wallpaper />
			<MenuBar />
			<div className="relative flex flex-1 flex-col pt-px">
				<TabStrip />
				<Toolbar />
				<Interstitial />
			</div>
			<div className="relative flex justify-center">
				<Dock />
			</div>
		</div>
	);
};

export default App;
